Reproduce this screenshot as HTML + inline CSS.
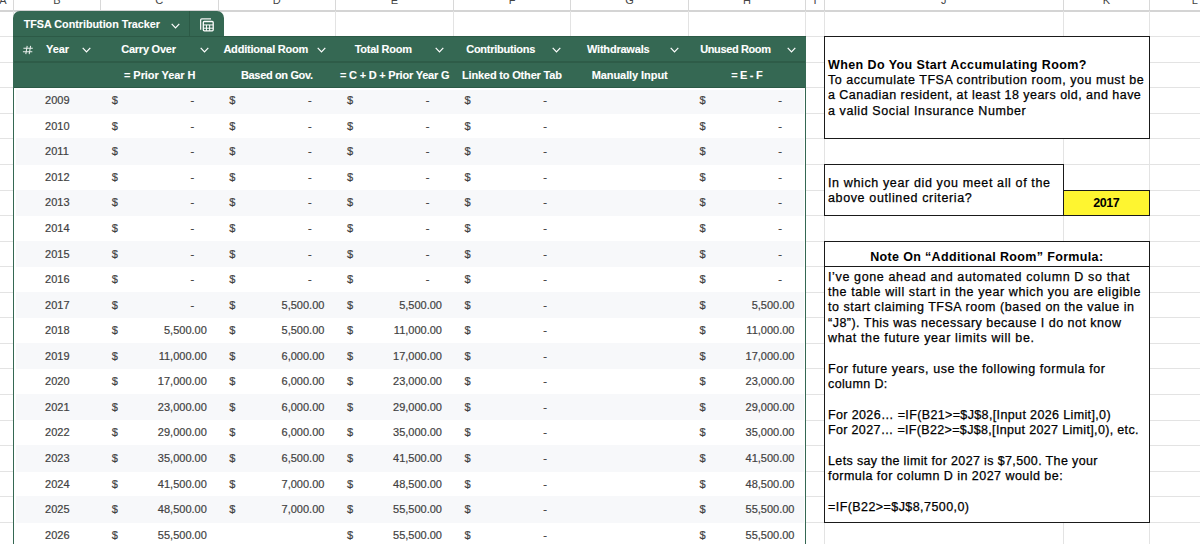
<!DOCTYPE html>
<html><head><meta charset="utf-8">
<style>
html,body{margin:0;padding:0;}
body{width:1200px;height:544px;overflow:hidden;position:relative;background:#fff;font-family:"Liberation Sans",sans-serif;}
.a{position:absolute;}
.t{position:absolute;white-space:pre;line-height:1;}
.hl{position:absolute;height:1px;background:#e3e3e3;}
.vl{position:absolute;width:1px;background:#e3e3e3;}
.hd{color:#fff;font-weight:bold;font-size:11px;-webkit-text-stroke:0.1px #fff;}
.bd{color:#3f3f3f;font-size:11px;-webkit-text-stroke:0.2px #444;}
.nt{color:#000;font-size:12.5px;-webkit-text-stroke:0.25px #000;}
.ch{position:absolute;width:9px;height:6px;}
</style></head><body>
<div class="t" style="left:-7.0px;width:20px;text-align:center;top:-5.5px;font-size:11px;color:#444">A</div><div class="t" style="left:47.0px;width:20px;text-align:center;top:-5.5px;font-size:11px;color:#444">B</div><div class="t" style="left:149.2px;width:20px;text-align:center;top:-5.5px;font-size:11px;color:#444">C</div><div class="t" style="left:266.8px;width:20px;text-align:center;top:-5.5px;font-size:11px;color:#444">D</div><div class="t" style="left:384.4px;width:20px;text-align:center;top:-5.5px;font-size:11px;color:#444">E</div><div class="t" style="left:502.0px;width:20px;text-align:center;top:-5.5px;font-size:11px;color:#444">F</div><div class="t" style="left:619.5px;width:20px;text-align:center;top:-5.5px;font-size:11px;color:#444">G</div><div class="t" style="left:737.0px;width:20px;text-align:center;top:-5.5px;font-size:11px;color:#444">H</div><div class="t" style="left:805.0px;width:20px;text-align:center;top:-5.5px;font-size:11px;color:#444">I</div><div class="t" style="left:933.8px;width:20px;text-align:center;top:-5.5px;font-size:11px;color:#444">J</div><div class="t" style="left:1096.3px;width:20px;text-align:center;top:-5.5px;font-size:11px;color:#444">K</div><div class="t" style="left:1184.7px;width:20px;text-align:center;top:-5.5px;font-size:11px;color:#444">L</div><div class="vl" style="left:13.0px;top:0;height:11px;background:#d8d8d8"></div><div class="vl" style="left:100.0px;top:0;height:11px;background:#d8d8d8"></div><div class="vl" style="left:217.5px;top:0;height:11px;background:#d8d8d8"></div><div class="vl" style="left:335.1px;top:0;height:11px;background:#d8d8d8"></div><div class="vl" style="left:452.7px;top:0;height:11px;background:#d8d8d8"></div><div class="vl" style="left:570.2px;top:0;height:11px;background:#d8d8d8"></div><div class="vl" style="left:687.7px;top:0;height:11px;background:#d8d8d8"></div><div class="vl" style="left:805.2px;top:0;height:11px;background:#d8d8d8"></div><div class="vl" style="left:823.8px;top:0;height:11px;background:#d8d8d8"></div><div class="vl" style="left:1062.8px;top:0;height:11px;background:#d8d8d8"></div><div class="vl" style="left:1148.8px;top:0;height:11px;background:#d8d8d8"></div><div class="hl" style="left:0;top:10.3px;width:1200px;height:1.5px;background:#d4d4d4"></div><div class="hl" style="left:0;top:36.1px;width:1200px"></div><div class="hl" style="left:0;top:61.6px;width:1200px"></div><div class="hl" style="left:0;top:87.2px;width:1200px"></div><div class="hl" style="left:0;top:112.8px;width:1200px"></div><div class="hl" style="left:0;top:138.3px;width:1200px"></div><div class="hl" style="left:0;top:163.9px;width:1200px"></div><div class="hl" style="left:0;top:189.5px;width:1200px"></div><div class="hl" style="left:0;top:215.0px;width:1200px"></div><div class="hl" style="left:0;top:240.6px;width:1200px"></div><div class="hl" style="left:0;top:266.1px;width:1200px"></div><div class="hl" style="left:0;top:291.7px;width:1200px"></div><div class="hl" style="left:0;top:317.3px;width:1200px"></div><div class="hl" style="left:0;top:342.8px;width:1200px"></div><div class="hl" style="left:0;top:368.4px;width:1200px"></div><div class="hl" style="left:0;top:394.0px;width:1200px"></div><div class="hl" style="left:0;top:419.5px;width:1200px"></div><div class="hl" style="left:0;top:445.1px;width:1200px"></div><div class="hl" style="left:0;top:470.7px;width:1200px"></div><div class="hl" style="left:0;top:496.2px;width:1200px"></div><div class="hl" style="left:0;top:521.8px;width:1200px"></div><div class="hl" style="left:0;top:547.4px;width:1200px"></div><div class="vl" style="left:13.0px;top:11px;height:540px"></div><div class="vl" style="left:100.0px;top:11px;height:540px"></div><div class="vl" style="left:217.5px;top:11px;height:540px"></div><div class="vl" style="left:335.1px;top:11px;height:540px"></div><div class="vl" style="left:452.7px;top:11px;height:540px"></div><div class="vl" style="left:570.2px;top:11px;height:540px"></div><div class="vl" style="left:687.7px;top:11px;height:540px"></div><div class="vl" style="left:805.2px;top:11px;height:540px"></div><div class="vl" style="left:823.8px;top:11px;height:540px"></div><div class="vl" style="left:1062.8px;top:11px;height:540px"></div><div class="vl" style="left:1148.8px;top:11px;height:540px"></div><div class="a" style="left:13.0px;top:11px;width:210.7px;height:26.1px;background:#356853;border-radius:7px 7px 0 0"></div><div class="a" style="left:188.5px;top:11px;width:1px;height:25.6px;background:#2c5a46"></div><div class="t hd" style="left:23.7px;top:18.5px;font-size:10.75px;letter-spacing:-0.005px">TFSA Contribution Tracker</div><svg class="ch" style="left:171.0px;top:22.8px" viewBox="0 0 9 6"><path d="M0.7 0.8 L4.5 4.8 L8.3 0.8" fill="none" stroke="#fff" stroke-width="1.2"/></svg><svg class="a" style="left:195px;top:14px" width="24" height="22" viewBox="195 14 24 22">
<path d="M200.65 29.8 V19.9 Q200.65 18.85 201.7 18.85 H211" fill="none" stroke="#f2f2f2" stroke-width="1.3"/>
<rect x="203.3" y="21.5" width="9.9" height="9.3" rx="1" fill="none" stroke="#fff" stroke-width="1.3"/>
<path d="M203.3 24.95 H213.2 M203.3 28.2 H213.2 M206.45 24.95 V30.8 M209.65 24.95 V30.8" stroke="#fff" stroke-width="1.0"/>
</svg><div class="a" style="left:13.0px;top:36.1px;width:793.0px;height:51.6px;background:#356853"></div><div class="a" style="left:13.0px;top:36.1px;width:793.0px;height:1px;background:#2c5a46"></div><div class="a" style="left:13.0px;top:61.4px;width:793.0px;height:1.5px;background:#2e5c48"></div><div class="a" style="left:13.0px;top:87.0px;width:793.0px;height:1px;background:#2c5a46"></div><svg class="a" style="left:22px;top:45px" width="12" height="10" viewBox="0 0 12 10"><path d="M5.2 0.8 L3.8 9.2 M8.6 0.8 L7.2 9.2 M1.4 3.3 H10.8 M0.9 6.7 H10.3" stroke="#e8eeeb" stroke-width="1.05" fill="none"/></svg><div class="t hd" style="left:46.0px;top:44.0px;letter-spacing:-0.083px">Year</div><div class="t hd" style="left:121.2px;top:44.0px;letter-spacing:-0.231px">Carry Over</div><div class="t hd" style="left:223.4px;top:44.0px;letter-spacing:-0.214px">Additional Room</div><div class="t hd" style="left:354.7px;top:44.0px;letter-spacing:-0.265px">Total Room</div><div class="t hd" style="left:466.2px;top:44.0px;letter-spacing:-0.242px">Contributions</div><div class="t hd" style="left:587.0px;top:44.0px;letter-spacing:-0.210px">Withdrawals</div><div class="t hd" style="left:700.2px;top:44.0px;letter-spacing:-0.381px">Unused Room</div><svg class="ch" style="left:82.3px;top:46.7px" viewBox="0 0 9 6"><path d="M0.7 0.8 L4.5 4.8 L8.3 0.8" fill="none" stroke="#fff" stroke-width="1.2"/></svg><svg class="ch" style="left:200.0px;top:46.7px" viewBox="0 0 9 6"><path d="M0.7 0.8 L4.5 4.8 L8.3 0.8" fill="none" stroke="#fff" stroke-width="1.2"/></svg><svg class="ch" style="left:317.0px;top:46.7px" viewBox="0 0 9 6"><path d="M0.7 0.8 L4.5 4.8 L8.3 0.8" fill="none" stroke="#fff" stroke-width="1.2"/></svg><svg class="ch" style="left:434.9px;top:46.7px" viewBox="0 0 9 6"><path d="M0.7 0.8 L4.5 4.8 L8.3 0.8" fill="none" stroke="#fff" stroke-width="1.2"/></svg><svg class="ch" style="left:552.0px;top:46.7px" viewBox="0 0 9 6"><path d="M0.7 0.8 L4.5 4.8 L8.3 0.8" fill="none" stroke="#fff" stroke-width="1.2"/></svg><svg class="ch" style="left:669.8px;top:46.7px" viewBox="0 0 9 6"><path d="M0.7 0.8 L4.5 4.8 L8.3 0.8" fill="none" stroke="#fff" stroke-width="1.2"/></svg><svg class="ch" style="left:786.9px;top:46.7px" viewBox="0 0 9 6"><path d="M0.7 0.8 L4.5 4.8 L8.3 0.8" fill="none" stroke="#fff" stroke-width="1.2"/></svg><div class="t hd" style="left:124.0px;top:69.6px;letter-spacing:-0.059px">= Prior Year H</div><div class="t hd" style="left:241.0px;top:69.6px;letter-spacing:-0.350px">Based on Gov.</div><div class="t hd" style="left:340.0px;top:69.6px;letter-spacing:-0.207px">= C + D + Prior Year G</div><div class="t hd" style="left:462.0px;top:69.6px;letter-spacing:-0.171px">Linked to Other Tab</div><div class="t hd" style="left:591.7px;top:69.6px;letter-spacing:-0.077px">Manually Input</div><div class="t hd" style="left:731.2px;top:69.6px;letter-spacing:-0.302px">= E - F</div><div class="a" style="left:13.0px;top:87.7px;width:793.0px;height:456.3px;background:#fff"></div><div class="a" style="left:15.6px;top:89.6px;width:788.2px;height:24.06px;background:#f7f8fa"></div><div class="t bd" style="left:45.1px;top:95.1px">2009</div><div class="t bd" style="left:111.8px;top:95.1px">$</div><div class="t bd" style="left:148.0px;width:46.2px;text-align:right;top:95.1px">-</div><div class="t bd" style="left:229.3px;top:95.1px">$</div><div class="t bd" style="left:265.6px;width:46.2px;text-align:right;top:95.1px">-</div><div class="t bd" style="left:346.9px;top:95.1px">$</div><div class="t bd" style="left:383.2px;width:46.2px;text-align:right;top:95.1px">-</div><div class="t bd" style="left:464.5px;top:95.1px">$</div><div class="t bd" style="left:500.7px;width:46.2px;text-align:right;top:95.1px">-</div><div class="t bd" style="left:699.5px;top:95.1px">$</div><div class="t bd" style="left:735.7px;width:46.2px;text-align:right;top:95.1px">-</div><div class="t bd" style="left:45.1px;top:120.7px">2010</div><div class="t bd" style="left:111.8px;top:120.7px">$</div><div class="t bd" style="left:148.0px;width:46.2px;text-align:right;top:120.7px">-</div><div class="t bd" style="left:229.3px;top:120.7px">$</div><div class="t bd" style="left:265.6px;width:46.2px;text-align:right;top:120.7px">-</div><div class="t bd" style="left:346.9px;top:120.7px">$</div><div class="t bd" style="left:383.2px;width:46.2px;text-align:right;top:120.7px">-</div><div class="t bd" style="left:464.5px;top:120.7px">$</div><div class="t bd" style="left:500.7px;width:46.2px;text-align:right;top:120.7px">-</div><div class="t bd" style="left:699.5px;top:120.7px">$</div><div class="t bd" style="left:735.7px;width:46.2px;text-align:right;top:120.7px">-</div><div class="a" style="left:15.6px;top:138.4px;width:788.2px;height:26.37px;background:#f7f8fa"></div><div class="t bd" style="left:45.1px;top:146.2px">2011</div><div class="t bd" style="left:111.8px;top:146.2px">$</div><div class="t bd" style="left:148.0px;width:46.2px;text-align:right;top:146.2px">-</div><div class="t bd" style="left:229.3px;top:146.2px">$</div><div class="t bd" style="left:265.6px;width:46.2px;text-align:right;top:146.2px">-</div><div class="t bd" style="left:346.9px;top:146.2px">$</div><div class="t bd" style="left:383.2px;width:46.2px;text-align:right;top:146.2px">-</div><div class="t bd" style="left:464.5px;top:146.2px">$</div><div class="t bd" style="left:500.7px;width:46.2px;text-align:right;top:146.2px">-</div><div class="t bd" style="left:699.5px;top:146.2px">$</div><div class="t bd" style="left:735.7px;width:46.2px;text-align:right;top:146.2px">-</div><div class="t bd" style="left:45.1px;top:171.8px">2012</div><div class="t bd" style="left:111.8px;top:171.8px">$</div><div class="t bd" style="left:148.0px;width:46.2px;text-align:right;top:171.8px">-</div><div class="t bd" style="left:229.3px;top:171.8px">$</div><div class="t bd" style="left:265.6px;width:46.2px;text-align:right;top:171.8px">-</div><div class="t bd" style="left:346.9px;top:171.8px">$</div><div class="t bd" style="left:383.2px;width:46.2px;text-align:right;top:171.8px">-</div><div class="t bd" style="left:464.5px;top:171.8px">$</div><div class="t bd" style="left:500.7px;width:46.2px;text-align:right;top:171.8px">-</div><div class="t bd" style="left:699.5px;top:171.8px">$</div><div class="t bd" style="left:735.7px;width:46.2px;text-align:right;top:171.8px">-</div><div class="a" style="left:15.6px;top:189.6px;width:788.2px;height:26.37px;background:#f7f8fa"></div><div class="t bd" style="left:45.1px;top:197.4px">2013</div><div class="t bd" style="left:111.8px;top:197.4px">$</div><div class="t bd" style="left:148.0px;width:46.2px;text-align:right;top:197.4px">-</div><div class="t bd" style="left:229.3px;top:197.4px">$</div><div class="t bd" style="left:265.6px;width:46.2px;text-align:right;top:197.4px">-</div><div class="t bd" style="left:346.9px;top:197.4px">$</div><div class="t bd" style="left:383.2px;width:46.2px;text-align:right;top:197.4px">-</div><div class="t bd" style="left:464.5px;top:197.4px">$</div><div class="t bd" style="left:500.7px;width:46.2px;text-align:right;top:197.4px">-</div><div class="t bd" style="left:699.5px;top:197.4px">$</div><div class="t bd" style="left:735.7px;width:46.2px;text-align:right;top:197.4px">-</div><div class="t bd" style="left:45.1px;top:222.9px">2014</div><div class="t bd" style="left:111.8px;top:222.9px">$</div><div class="t bd" style="left:148.0px;width:46.2px;text-align:right;top:222.9px">-</div><div class="t bd" style="left:229.3px;top:222.9px">$</div><div class="t bd" style="left:265.6px;width:46.2px;text-align:right;top:222.9px">-</div><div class="t bd" style="left:346.9px;top:222.9px">$</div><div class="t bd" style="left:383.2px;width:46.2px;text-align:right;top:222.9px">-</div><div class="t bd" style="left:464.5px;top:222.9px">$</div><div class="t bd" style="left:500.7px;width:46.2px;text-align:right;top:222.9px">-</div><div class="t bd" style="left:699.5px;top:222.9px">$</div><div class="t bd" style="left:735.7px;width:46.2px;text-align:right;top:222.9px">-</div><div class="a" style="left:15.6px;top:240.7px;width:788.2px;height:26.37px;background:#f7f8fa"></div><div class="t bd" style="left:45.1px;top:248.5px">2015</div><div class="t bd" style="left:111.8px;top:248.5px">$</div><div class="t bd" style="left:148.0px;width:46.2px;text-align:right;top:248.5px">-</div><div class="t bd" style="left:229.3px;top:248.5px">$</div><div class="t bd" style="left:265.6px;width:46.2px;text-align:right;top:248.5px">-</div><div class="t bd" style="left:346.9px;top:248.5px">$</div><div class="t bd" style="left:383.2px;width:46.2px;text-align:right;top:248.5px">-</div><div class="t bd" style="left:464.5px;top:248.5px">$</div><div class="t bd" style="left:500.7px;width:46.2px;text-align:right;top:248.5px">-</div><div class="t bd" style="left:699.5px;top:248.5px">$</div><div class="t bd" style="left:735.7px;width:46.2px;text-align:right;top:248.5px">-</div><div class="t bd" style="left:45.1px;top:274.0px">2016</div><div class="t bd" style="left:111.8px;top:274.0px">$</div><div class="t bd" style="left:148.0px;width:46.2px;text-align:right;top:274.0px">-</div><div class="t bd" style="left:229.3px;top:274.0px">$</div><div class="t bd" style="left:265.6px;width:46.2px;text-align:right;top:274.0px">-</div><div class="t bd" style="left:346.9px;top:274.0px">$</div><div class="t bd" style="left:383.2px;width:46.2px;text-align:right;top:274.0px">-</div><div class="t bd" style="left:464.5px;top:274.0px">$</div><div class="t bd" style="left:500.7px;width:46.2px;text-align:right;top:274.0px">-</div><div class="t bd" style="left:699.5px;top:274.0px">$</div><div class="t bd" style="left:735.7px;width:46.2px;text-align:right;top:274.0px">-</div><div class="a" style="left:15.6px;top:291.8px;width:788.2px;height:26.36px;background:#f7f8fa"></div><div class="t bd" style="left:45.1px;top:299.6px">2017</div><div class="t bd" style="left:111.8px;top:299.6px">$</div><div class="t bd" style="left:148.0px;width:46.2px;text-align:right;top:299.6px">-</div><div class="t bd" style="left:229.3px;top:299.6px">$</div><div class="t bd" style="left:245.6px;width:78.8px;text-align:right;top:299.6px">5,500.00</div><div class="t bd" style="left:346.9px;top:299.6px">$</div><div class="t bd" style="left:363.2px;width:78.8px;text-align:right;top:299.6px">5,500.00</div><div class="t bd" style="left:464.5px;top:299.6px">$</div><div class="t bd" style="left:500.7px;width:46.2px;text-align:right;top:299.6px">-</div><div class="t bd" style="left:699.5px;top:299.6px">$</div><div class="t bd" style="left:715.7px;width:78.8px;text-align:right;top:299.6px">5,500.00</div><div class="t bd" style="left:45.1px;top:325.2px">2018</div><div class="t bd" style="left:111.8px;top:325.2px">$</div><div class="t bd" style="left:128.0px;width:78.8px;text-align:right;top:325.2px">5,500.00</div><div class="t bd" style="left:229.3px;top:325.2px">$</div><div class="t bd" style="left:245.6px;width:78.8px;text-align:right;top:325.2px">5,500.00</div><div class="t bd" style="left:346.9px;top:325.2px">$</div><div class="t bd" style="left:363.2px;width:78.8px;text-align:right;top:325.2px">11,000.00</div><div class="t bd" style="left:464.5px;top:325.2px">$</div><div class="t bd" style="left:500.7px;width:46.2px;text-align:right;top:325.2px">-</div><div class="t bd" style="left:699.5px;top:325.2px">$</div><div class="t bd" style="left:715.7px;width:78.8px;text-align:right;top:325.2px">11,000.00</div><div class="a" style="left:15.6px;top:342.9px;width:788.2px;height:26.36px;background:#f7f8fa"></div><div class="t bd" style="left:45.1px;top:350.7px">2019</div><div class="t bd" style="left:111.8px;top:350.7px">$</div><div class="t bd" style="left:128.0px;width:78.8px;text-align:right;top:350.7px">11,000.00</div><div class="t bd" style="left:229.3px;top:350.7px">$</div><div class="t bd" style="left:245.6px;width:78.8px;text-align:right;top:350.7px">6,000.00</div><div class="t bd" style="left:346.9px;top:350.7px">$</div><div class="t bd" style="left:363.2px;width:78.8px;text-align:right;top:350.7px">17,000.00</div><div class="t bd" style="left:464.5px;top:350.7px">$</div><div class="t bd" style="left:500.7px;width:46.2px;text-align:right;top:350.7px">-</div><div class="t bd" style="left:699.5px;top:350.7px">$</div><div class="t bd" style="left:715.7px;width:78.8px;text-align:right;top:350.7px">17,000.00</div><div class="t bd" style="left:45.1px;top:376.3px">2020</div><div class="t bd" style="left:111.8px;top:376.3px">$</div><div class="t bd" style="left:128.0px;width:78.8px;text-align:right;top:376.3px">17,000.00</div><div class="t bd" style="left:229.3px;top:376.3px">$</div><div class="t bd" style="left:245.6px;width:78.8px;text-align:right;top:376.3px">6,000.00</div><div class="t bd" style="left:346.9px;top:376.3px">$</div><div class="t bd" style="left:363.2px;width:78.8px;text-align:right;top:376.3px">23,000.00</div><div class="t bd" style="left:464.5px;top:376.3px">$</div><div class="t bd" style="left:500.7px;width:46.2px;text-align:right;top:376.3px">-</div><div class="t bd" style="left:699.5px;top:376.3px">$</div><div class="t bd" style="left:715.7px;width:78.8px;text-align:right;top:376.3px">23,000.00</div><div class="a" style="left:15.6px;top:394.1px;width:788.2px;height:26.36px;background:#f7f8fa"></div><div class="t bd" style="left:45.1px;top:401.9px">2021</div><div class="t bd" style="left:111.8px;top:401.9px">$</div><div class="t bd" style="left:128.0px;width:78.8px;text-align:right;top:401.9px">23,000.00</div><div class="t bd" style="left:229.3px;top:401.9px">$</div><div class="t bd" style="left:245.6px;width:78.8px;text-align:right;top:401.9px">6,000.00</div><div class="t bd" style="left:346.9px;top:401.9px">$</div><div class="t bd" style="left:363.2px;width:78.8px;text-align:right;top:401.9px">29,000.00</div><div class="t bd" style="left:464.5px;top:401.9px">$</div><div class="t bd" style="left:500.7px;width:46.2px;text-align:right;top:401.9px">-</div><div class="t bd" style="left:699.5px;top:401.9px">$</div><div class="t bd" style="left:715.7px;width:78.8px;text-align:right;top:401.9px">29,000.00</div><div class="t bd" style="left:45.1px;top:427.4px">2022</div><div class="t bd" style="left:111.8px;top:427.4px">$</div><div class="t bd" style="left:128.0px;width:78.8px;text-align:right;top:427.4px">29,000.00</div><div class="t bd" style="left:229.3px;top:427.4px">$</div><div class="t bd" style="left:245.6px;width:78.8px;text-align:right;top:427.4px">6,000.00</div><div class="t bd" style="left:346.9px;top:427.4px">$</div><div class="t bd" style="left:363.2px;width:78.8px;text-align:right;top:427.4px">35,000.00</div><div class="t bd" style="left:464.5px;top:427.4px">$</div><div class="t bd" style="left:500.7px;width:46.2px;text-align:right;top:427.4px">-</div><div class="t bd" style="left:699.5px;top:427.4px">$</div><div class="t bd" style="left:715.7px;width:78.8px;text-align:right;top:427.4px">35,000.00</div><div class="a" style="left:15.6px;top:445.2px;width:788.2px;height:26.36px;background:#f7f8fa"></div><div class="t bd" style="left:45.1px;top:453.0px">2023</div><div class="t bd" style="left:111.8px;top:453.0px">$</div><div class="t bd" style="left:128.0px;width:78.8px;text-align:right;top:453.0px">35,000.00</div><div class="t bd" style="left:229.3px;top:453.0px">$</div><div class="t bd" style="left:245.6px;width:78.8px;text-align:right;top:453.0px">6,500.00</div><div class="t bd" style="left:346.9px;top:453.0px">$</div><div class="t bd" style="left:363.2px;width:78.8px;text-align:right;top:453.0px">41,500.00</div><div class="t bd" style="left:464.5px;top:453.0px">$</div><div class="t bd" style="left:500.7px;width:46.2px;text-align:right;top:453.0px">-</div><div class="t bd" style="left:699.5px;top:453.0px">$</div><div class="t bd" style="left:715.7px;width:78.8px;text-align:right;top:453.0px">41,500.00</div><div class="t bd" style="left:45.1px;top:478.6px">2024</div><div class="t bd" style="left:111.8px;top:478.6px">$</div><div class="t bd" style="left:128.0px;width:78.8px;text-align:right;top:478.6px">41,500.00</div><div class="t bd" style="left:229.3px;top:478.6px">$</div><div class="t bd" style="left:245.6px;width:78.8px;text-align:right;top:478.6px">7,000.00</div><div class="t bd" style="left:346.9px;top:478.6px">$</div><div class="t bd" style="left:363.2px;width:78.8px;text-align:right;top:478.6px">48,500.00</div><div class="t bd" style="left:464.5px;top:478.6px">$</div><div class="t bd" style="left:500.7px;width:46.2px;text-align:right;top:478.6px">-</div><div class="t bd" style="left:699.5px;top:478.6px">$</div><div class="t bd" style="left:715.7px;width:78.8px;text-align:right;top:478.6px">48,500.00</div><div class="a" style="left:15.6px;top:496.3px;width:788.2px;height:26.37px;background:#f7f8fa"></div><div class="t bd" style="left:45.1px;top:504.1px">2025</div><div class="t bd" style="left:111.8px;top:504.1px">$</div><div class="t bd" style="left:128.0px;width:78.8px;text-align:right;top:504.1px">48,500.00</div><div class="t bd" style="left:229.3px;top:504.1px">$</div><div class="t bd" style="left:245.6px;width:78.8px;text-align:right;top:504.1px">7,000.00</div><div class="t bd" style="left:346.9px;top:504.1px">$</div><div class="t bd" style="left:363.2px;width:78.8px;text-align:right;top:504.1px">55,500.00</div><div class="t bd" style="left:464.5px;top:504.1px">$</div><div class="t bd" style="left:500.7px;width:46.2px;text-align:right;top:504.1px">-</div><div class="t bd" style="left:699.5px;top:504.1px">$</div><div class="t bd" style="left:715.7px;width:78.8px;text-align:right;top:504.1px">55,500.00</div><div class="t bd" style="left:45.1px;top:529.7px">2026</div><div class="t bd" style="left:111.8px;top:529.7px">$</div><div class="t bd" style="left:128.0px;width:78.8px;text-align:right;top:529.7px">55,500.00</div><div class="t bd" style="left:346.9px;top:529.7px">$</div><div class="t bd" style="left:363.2px;width:78.8px;text-align:right;top:529.7px">55,500.00</div><div class="t bd" style="left:464.5px;top:529.7px">$</div><div class="t bd" style="left:500.7px;width:46.2px;text-align:right;top:529.7px">-</div><div class="t bd" style="left:699.5px;top:529.7px">$</div><div class="t bd" style="left:715.7px;width:78.8px;text-align:right;top:529.7px">55,500.00</div><div class="a" style="left:12.5px;top:36.6px;width:1px;height:507.4px;background:#356853"></div><div class="a" style="left:805px;top:36.6px;width:1px;height:507.4px;background:#356853"></div><div class="a" style="box-sizing:border-box;left:823.7px;top:36.1px;width:326.2px;height:103.1px;border:1.2px solid #1a1a1a;background:#fff"></div><div class="a" style="box-sizing:border-box;left:823.7px;top:164.0px;width:240.2px;height:51.9px;border:1.2px solid #1a1a1a;background:#fff"></div><div class="a" style="box-sizing:border-box;left:1062.7px;top:189.6px;width:87.2px;height:26.4px;border:1.2px solid #1a1a1a;background:#fef530"></div><div class="a" style="box-sizing:border-box;left:823.7px;top:240.7px;width:326.2px;height:26.4px;border:1.2px solid #1a1a1a;background:#fff"></div><div class="a" style="box-sizing:border-box;left:823.7px;top:266.2px;width:326.2px;height:256.4px;border:1.2px solid #1a1a1a;background:#fff"></div><div class="t nt" style="left:828.0px;top:58.5px;font-weight:bold;-webkit-text-stroke:0;letter-spacing:0.405px">When Do You Start Accumulating Room?</div><div class="t nt" style="left:828.0px;top:73.8px;letter-spacing:0.529px">To accumulate TFSA contribution room, you must be</div><div class="t nt" style="left:828.0px;top:89.2px;letter-spacing:0.465px">a Canadian resident, at least 18 years old, and have</div><div class="t nt" style="left:828.0px;top:104.7px;letter-spacing:0.593px">a valid Social Insurance Number</div><div class="t nt" style="left:828.0px;top:176.8px;letter-spacing:0.627px">In which year did you meet all of the</div><div class="t nt" style="left:828.0px;top:192.2px;letter-spacing:0.628px">above outlined criteria?</div><div class="t nt" style="left:1063.3px;width:86px;text-align:center;top:197.0px;font-weight:bold;-webkit-text-stroke:0;letter-spacing:-0.438px">2017</div><div class="t nt" style="left:824.3px;width:325px;text-align:center;top:251.2px;font-weight:bold;-webkit-text-stroke:0;letter-spacing:0.345px">Note On “Additional Room” Formula:</div><div class="t nt" style="left:828.0px;top:270.6px;letter-spacing:0.629px">I’ve gone ahead and automated column D so that</div><div class="t nt" style="left:828.0px;top:285.9px;letter-spacing:0.574px">the table will start in the year which you are eligible</div><div class="t nt" style="left:828.0px;top:301.2px;letter-spacing:0.521px">to start claiming TFSA room (based on the value in</div><div class="t nt" style="left:828.0px;top:316.6px;letter-spacing:0.484px">“J8”). This was necessary because I do not know</div><div class="t nt" style="left:828.0px;top:331.9px;letter-spacing:0.625px">what the future year limits will be.</div><div class="t nt" style="left:828.0px;top:362.8px;letter-spacing:0.554px">For future years, use the following formula for</div><div class="t nt" style="left:828.0px;top:378.1px;letter-spacing:0.377px">column D:</div><div class="t nt" style="left:828.0px;top:409.1px;letter-spacing:0.366px">For 2026… =IF(B21&gt;=$J$8,[Input 2026 Limit],0)</div><div class="t nt" style="left:828.0px;top:424.4px;letter-spacing:0.338px">For 2027… =IF(B22&gt;=$J$8,[Input 2027 Limit],0), etc.</div><div class="t nt" style="left:828.0px;top:455.1px;letter-spacing:0.365px">Lets say the limit for 2027 is $7,500. The your</div><div class="t nt" style="left:828.0px;top:470.4px;letter-spacing:0.463px">formula for column D in 2027 would be:</div><div class="t nt" style="left:828.0px;top:500.9px;letter-spacing:0.430px">=IF(B22&gt;=$J$8,7500,0)</div></body></html>
